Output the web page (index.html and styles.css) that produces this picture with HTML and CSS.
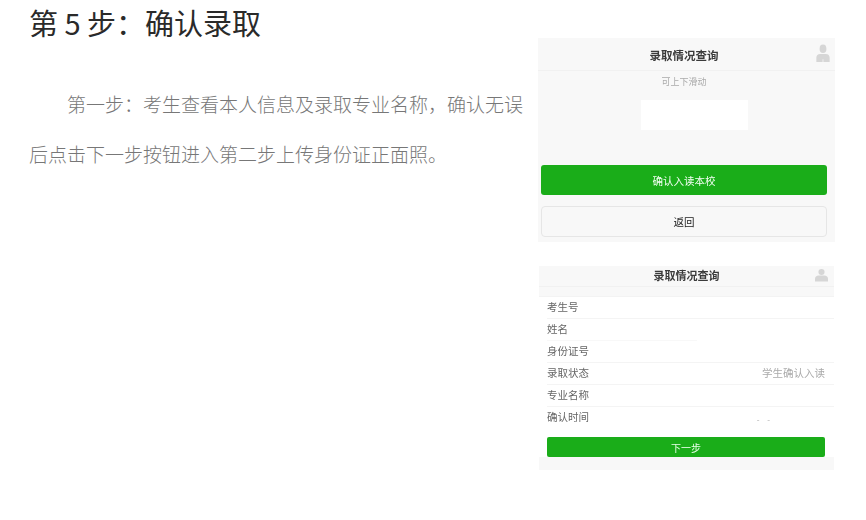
FILE: index.html
```html
<!DOCTYPE html>
<html lang="zh-CN">
<head>
<meta charset="utf-8">
<title>第 5 步：确认录取</title>
<link rel="stylesheet" href="styles.css">
</head>
<body>
<main class="page">
  <section class="intro">
    <h1 class="step-title">第 5 步：确认录取</h1>
    <p class="step-text">第一步：考生查看本人信息及录取专业名称，确认无误后点击下一步按钮进入第二步上传身份证正面照。</p>
  </section>
  <aside class="shots">
    <div class="phone phone-confirm">
      <header class="bar">
        <span class="bar-title">录取情况查询</span>
        <svg class="avatar" viewBox="0 0 14 20"><ellipse cx="7" cy="5" rx="3.6" ry="4.6"/><path d="M4 10.5h6c2.5 0 4 1.5 4 4V19H7.4v-3H6.6v3H0v-4.500c0-2.500 1.500-4 4-4z"/></svg>
      </header>
      <p class="hint">可上下滑动</p>
      <div class="blank"></div>
      <div class="btn btn-green">确认入读本校</div>
      <div class="btn btn-plain">返回</div>
    </div>
    <div class="phone phone-info">
      <header class="bar bar-small">
        <span class="bar-title">录取情况查询</span>
        <svg class="avatar" viewBox="0 0 14 14"><circle cx="7" cy="3.800" r="3.300"/><path d="M4 7.500h6c2.500 0 4 1.500 4 3.500v3H0v-3c0-2 1.500-3.500 4-3.500z"/></svg>
      </header>
      <div class="band"></div>
      <div class="rows">
        <div class="row"><span>考生号</span></div>
        <div class="row row-short"><span>姓名</span></div>
        <div class="row"><span>身份证号</span></div>
        <div class="row"><span>录取状态</span><span class="value">学生确认入读</span></div>
        <div class="row"><span>专业名称</span></div>
        <div class="row row-last"><span>确认时间</span><span class="value value-date">- -</span></div>
      </div>
      <div class="next-wrap"><div class="btn btn-next">下一步</div></div>
    </div>
  </aside>
</main>
</body>
</html>
```
FILE: styles.css
```css
* { box-sizing: border-box; }
html, body { margin: 0; background: #fff; }
body { font-family: "Noto Sans CJK SC", "Liberation Sans", sans-serif; font-weight: 300; }
.page { display: flex; gap: 12px; padding-left: 29px; height: 520px; overflow: hidden; }
.intro { width: 497px; flex: none; }
.step-title { margin: 0; font-size: 29px; line-height: 44px; font-weight: 400; color: #2a2a2a; }
.step-text { margin: 35px 0 0; font-size: 19px; line-height: 50px; text-indent: 38px; color: #777; }
.shots { width: 297px; flex: none; padding-top: 38px; display: flex; flex-direction: column; gap: 24px; font-weight: 400; }
.phone { background: #f8f8f8; color: #333; filter: blur(.3px); }
.phone-confirm { height: 204px; padding: 0 3px; }
.phone-info { height: 204px; margin: 0 1px; background: #fff; }
.bar { position: relative; height: 33px; margin: 0 -3px; display: flex; align-items: center; justify-content: center; padding: 2px 5px 0 0; border-bottom: 1px solid #f1f1f1; }
.bar-title { font-size: 11.500px; font-weight: 700; line-height: 20px; color: #3a3a3a; }
.avatar { position: absolute; right: 5px; top: 6px; width: 14px; height: 19px; fill: #d6d6d6; }
.hint { margin: 3px 0 0; padding-right: 5px; font-size: 9px; line-height: 16px; color: #aaa; text-align: center; }
.blank { width: 107px; height: 30px; margin: 10px 0 0 100px; background: #fff; }
.btn { display: flex; align-items: center; justify-content: center; }
.btn-green { height: 30px; margin-top: 35px; width: 286px; border-radius: 3px; background: #1aad19; color: #f4fff4; font-size: 10.500px; }
.btn-plain { height: 31px; margin-top: 11px; width: 286px; border: 1px solid #e6e6e6; border-radius: 4px; font-size: 10.500px; color: #222; }
.bar-small { height: 21px; margin: 0; padding: 0 0 2px; background: #f8f8f8; }
.bar-small .bar-title { font-size: 11px; line-height: 16px; }
.bar-small .avatar { right: 6px; top: 2px; width: 13px; height: 14px; }
.band { height: 10px; background: #f8f8f8; border-bottom: 1px solid #f3f3f3; }
.rows { padding-left: 8px; }
.row { height: 22px; display: flex; align-items: center; justify-content: space-between; padding: 0 9px 2px 0; border-bottom: 1px solid #f4f4f4; font-size: 10.500px; line-height: 14px; color: #666; }
.row-short { border-bottom: 0; box-shadow: inset 0 -1px 0 #f8f8f8; margin-right: 137px; }
.row-last { border-bottom: 0; }
.value { font-size: 10.500px; color: #aaa; }
.value-date { margin: 6px 52px 0 0; font-size: 8px; letter-spacing: 3px; }
.next-wrap { margin-top: 8px; padding: 0 9px 13px 8px; background: linear-gradient(#fff 20px, #f8f8f8 20px); }
.btn-next { height: 20px; border-radius: 2px; background: #1aad19; color: #e9ffe9; font-size: 10px; }
```
